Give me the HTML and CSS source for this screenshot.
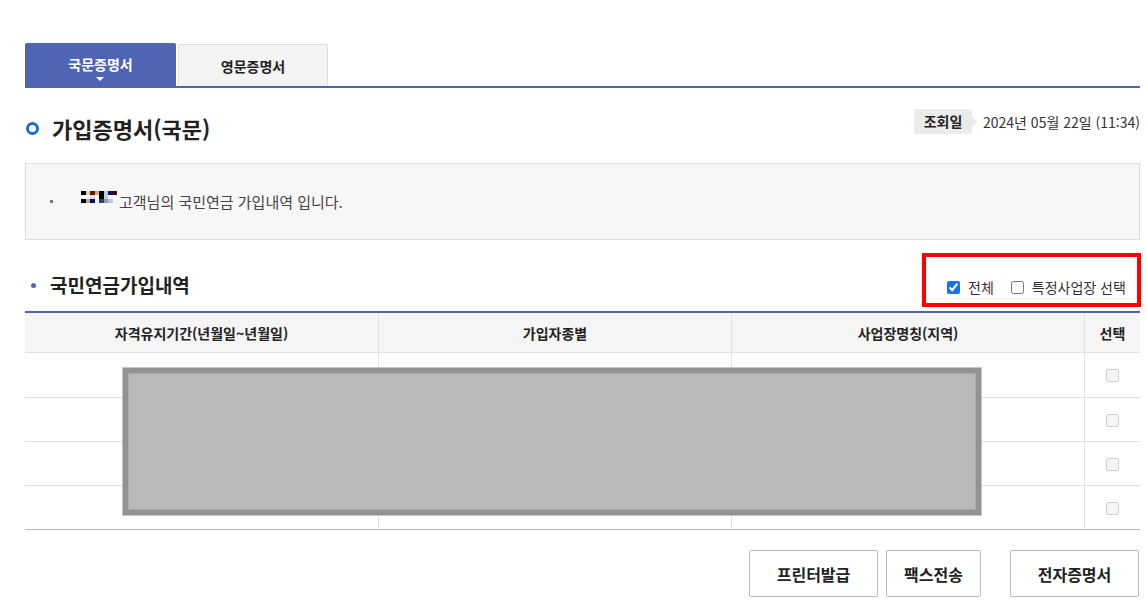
FILE: index.html
```html
<!DOCTYPE html>
<html lang="ko">
<head>
    <meta charset="UTF-8">
    <meta name="viewport" content="width=device-width, initial-scale=1.0">
    <title>가입증명서(국문)</title>
    <link rel="stylesheet" href="styles.css">
</head>
<body>
    <div class="wrap">
        <ul class="tabs">
            <li class="tab on">국문증명서</li>
            <li class="tab">영문증명서</li>
        </ul>

        <div class="title-row">
            <h2 class="title"><span class="ring"></span>가입증명서(국문)</h2>
            <div class="date">
                <span class="date-label">조회일</span>
                <span class="date-value">2024년 05월 22일 (11:34)</span>
            </div>
        </div>

        <div class="info">
            <span class="dot"></span>
            <span class="mosaic">
                <i style="background:#000"></i><i style="background:#e8d3b0"></i><i style="background:#6b0f0f"></i><i style="background:#d9a97a"></i><i style="background:#000"></i><i style="background:#a8cdf0"></i><i style="background:#14145c"></i><i style="background:#3a0a0a"></i>
                <i></i><i></i><i style="background:#ddd"></i><i></i><i style="background:#000"></i><i style="background:#ccc"></i><i></i><i></i>
                <i style="background:#000"></i><i style="background:#aaa"></i><i style="background:#0a0a55"></i><i></i><i style="background:#1d4d6e"></i><i style="background:#999"></i><i style="background:#a8cdf0"></i><i></i>
            </span>
            고객님의 국민연금 가입내역 입니다.
        </div>

        <div class="sub-row">
            <h3 class="sub-title">국민연금가입내역</h3>
            <div class="checks">
                <label><input type="checkbox" checked> 전체</label>
                <label><input type="checkbox"> 특정사업장 선택</label>
            </div>
        </div>

        <div class="table-box">
            <table cellspacing="0">
                <thead>
                    <tr>
                        <th class="c1">자격유지기간(년월일~년월일)</th>
                        <th class="c2">가입자종별</th>
                        <th class="c3">사업장명칭(지역)</th>
                        <th class="c4">선택</th>
                    </tr>
                </thead>
                <tbody>
                    <tr><td></td><td></td><td></td><td><span class="box"></span></td></tr>
                    <tr><td></td><td></td><td></td><td><span class="box"></span></td></tr>
                    <tr><td></td><td></td><td></td><td><span class="box"></span></td></tr>
                    <tr><td></td><td></td><td></td><td><span class="box"></span></td></tr>
                </tbody>
            </table>
            <div class="redact"></div>
        </div>

        <div class="buttons">
            <button class="btn w1">프린터발급</button>
            <button class="btn w2">팩스전송</button>
            <button class="btn w1 far">전자증명서</button>
        </div>
    </div>
</body>
</html>
```

FILE: styles.css
```css
* {
    margin: 0;
    padding: 0;
    box-sizing: border-box;
    font-family: 'Noto Sans CJK KR', 'Noto Sans', sans-serif;
}

body {
    background-color: #fff;
    color: #333;
}

.wrap {
    width: 1115px;
    margin-left: 25px;
    padding-top: 43px;
}

/* tabs */
.tabs {
    display: flex;
    align-items: flex-end;
    list-style: none;
    height: 45px;
    border-bottom: 2px solid #5064b4;
}

.tab {
    width: 150px;
    height: 42px;
    margin-left: 2px;
    display: flex;
    align-items: center;
    justify-content: center;
    font-size: 14px;
    font-weight: bold;
    color: #222;
    background-color: #f4f4f4;
    border: 1px solid #ddd;
    border-bottom: 0;
    border-radius: 2px 2px 0 0;
}

.tab.on {
    position: relative;
    width: 151px;
    height: 43px;
    margin-left: 0;
    color: #fff;
    background-color: #5064b4;
    border: 0;
    padding-bottom: 1px;
}

.tab.on::after {
    content: "";
    position: absolute;
    left: 71px;
    bottom: 5px;
    border-left: 4px solid transparent;
    border-right: 4px solid transparent;
    border-top: 4px solid #fff;
}

/* title */
.title-row {
    display: flex;
    justify-content: space-between;
    align-items: flex-start;
    margin-top: 21px;
    height: 54px;
}

.title {
    display: flex;
    align-items: center;
    font-size: 22px;
    font-weight: bold;
    color: #222;
    margin-top: 3px;
}

.ring {
    width: 13px;
    height: 13px;
    border: 3px solid #1d6fc4;
    border-radius: 50%;
    margin: 1px 13px 0 1px;
}

.date {
    display: flex;
    align-items: center;
}

.date-label {
    position: relative;
    width: 58px;
    height: 25px;
    line-height: 25px;
    text-align: center;
    font-size: 14px;
    font-weight: bold;
    color: #222;
    background-color: #ebebeb;
    border-radius: 2px;
}

.date-label::after {
    content: "";
    position: absolute;
    right: -5px;
    top: 8px;
    border-top: 5px solid transparent;
    border-bottom: 5px solid transparent;
    border-left: 5px solid #ebebeb;
}

.date-value {
    margin-left: 11px;
    font-size: 14px;
    color: #333;
}

/* info box */
.info {
    display: flex;
    align-items: center;
    height: 77px;
    padding-left: 24px;
    font-size: 15px;
    color: #444;
    background-color: #f7f7f7;
    border: 1px solid #ddd;
}

.dot {
    width: 3px;
    height: 3px;
    background-color: #777;
    margin-right: 28px;
    margin-top: 0;
}

.mosaic {
    display: grid;
    grid-template-columns: repeat(8, 4.5px);
    grid-auto-rows: 4px;
    width: 37px;
    margin-top: -9px;
    margin-right: 1px;
}

.mosaic i {
    display: block;
}

/* sub title + checks */
.sub-row {
    display: flex;
    justify-content: space-between;
    align-items: flex-end;
    margin-top: 13px;
    height: 54px;
}

.sub-title {
    position: relative;
    padding-left: 25px;
    margin-bottom: 9px;
    font-size: 19px;
    font-weight: bold;
    color: #222;
}

.sub-title::before {
    content: "";
    position: absolute;
    left: 6px;
    top: 12px;
    width: 5px;
    height: 5px;
    border-radius: 50%;
    background-color: #5064b4;
}

.checks {
    display: flex;
    align-items: center;
    gap: 17px;
    height: 54px;
    width: 219px;
    margin-right: -1px;
    padding: 14px 0 0 21px;
    border: 4px solid #f00;
    font-size: 14px;
    color: #333;
}

.checks label {
    display: flex;
    align-items: center;
    gap: 8px;
}

.checks input {
    width: 13px;
    height: 13px;
    margin: 0;
    accent-color: #1a73e8;
}

/* table */
.table-box {
    position: relative;
    margin-top: 4px;
}

table {
    width: 100%;
    border-top: 2px solid #5064b4;
    border-bottom: 1px solid #bbb;
}

table th {
    height: 40px;
    font-size: 14px;
    font-weight: bold;
    color: #222;
    background-color: #f5f5f5;
    border-bottom: 1px solid #e0e0e0;
    border-left: 1px solid #e0e0e0;
}

table th:first-child,
table td:first-child {
    border-left: 0;
}

.c1 { width: 353px; }
.c2 { width: 353px; }
.c3 { width: 353px; }
.c4 { width: 56px; }

table td {
    height: 44px;
    text-align: center;
    border-left: 1px solid #e0e0e0;
    border-top: 1px solid #e0e0e0;
}

table tbody tr:first-child td {
    border-top: 0;
}

.box {
    display: inline-block;
    width: 13px;
    height: 13px;
    margin-top: 3px;
    border: 1px solid #cfcfcf;
    border-radius: 2px;
    background-color: #f5f5f5;
}

.redact {
    position: absolute;
    left: 98px;
    top: 57px;
    width: 858px;
    height: 147px;
    background-color: #b9b9b9;
    border: 5px solid #939393;
    box-shadow: inset 0 0 0 1px #a8a8a8, 0 0 0 1px #c4c4c4;
}

/* buttons */
.buttons {
    display: flex;
    justify-content: flex-end;
    gap: 8px;
    margin-top: 20px;
    padding-right: 1px;
}

.btn {
    height: 47px;
    font-size: 16px;
    font-weight: bold;
    color: #222;
    background-color: #fff;
    border: 1px solid #bbb;
    border-radius: 2px;
}

.w1 { width: 129px; }
.w2 { width: 95px; }
.far { margin-left: 21px; }
```
